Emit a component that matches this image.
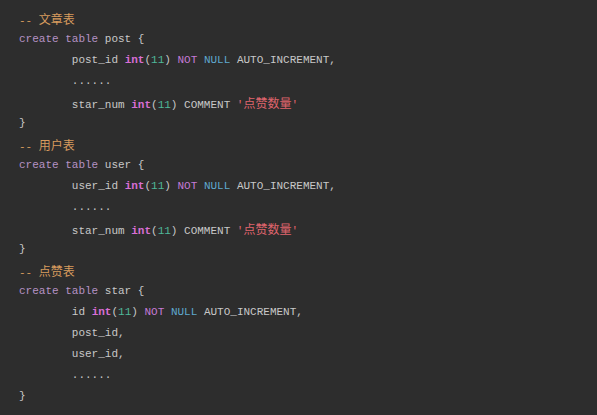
type Tok = [string, string];

const C = {
  txt: "text-[#c8c8c8]",
  cmt: "text-[#d79b5e]",
  kw: "text-[#b592c4]",
  type: "text-[#d86ed4] font-bold",
  num: "text-[#4fb89a]",
  not: "text-[#c57ad6]",
  nul: "text-[#5fa8cf]",
  str: "text-[#e0656e]",
};

const IND = "        ";

function cjk(s: string) {
  return <span className="text-[12px] [font-family:'Noto_Sans_CJK_SC',sans-serif]">{s}</span>;
}

function table(name: string, cn: string, body: Tok[][]): Tok[][] {
  return [
    [["cmt", "-- "], ["cmtcjk", cn]],
    [["kw", "create table"], ["txt", ` ${name} {`]],
    ...body,
    [["txt", "}"]],
  ];
}

function idLine(field: string): Tok[] {
  return [
    ["txt", IND + field + " "],
    ["type", "int"],
    ["txt", "("],
    ["num", "11"],
    ["txt", ") "],
    ["not", "NOT"],
    ["txt", " "],
    ["nul", "NULL"],
    ["txt", " AUTO_INCREMENT,"],
  ];
}

const starLine: Tok[] = [
  ["txt", IND + "star_num "],
  ["type", "int"],
  ["txt", "("],
  ["num", "11"],
  ["txt", ") COMMENT "],
  ["str", "'"],
  ["strcjk", "点赞数量"],
  ["str", "'"],
];

const dots: Tok[] = [["txt", IND + "......"]];

const lines: Tok[][] = [
  ...table("post", "文章表", [idLine("post_id"), dots, starLine]),
  ...table("user", "用户表", [idLine("user_id"), dots, starLine]),
  ...table("star", "点赞表", [
    idLine("id"),
    [["txt", IND + "post_id,"]],
    [["txt", IND + "user_id,"]],
    dots,
  ]),
];

function render([kind, text]: Tok, i: number) {
  if (kind === "cmtcjk") return <span key={i} className={C.cmt}>{cjk(text)}</span>;
  if (kind === "strcjk") return <span key={i} className={C.str}>{cjk(text)}</span>;
  return (
    <span key={i} className={C[kind as keyof typeof C]}>
      {text}
    </span>
  );
}

export default function App() {
  return (
    <div className="w-[597px] h-[415px] bg-[#2d2d2d] overflow-hidden">
      <pre className="pt-[8px] pl-[19px] text-[11px] leading-[21px] text-[#c8c8c8] [font-family:'Liberation_Mono','Noto_Sans_CJK_SC',monospace] whitespace-pre">
        {lines.map((l, i) => (
          <div key={i} className="h-[21px]">
            {l.map(render)}
          </div>
        ))}
      </pre>
    </div>
  );
}
